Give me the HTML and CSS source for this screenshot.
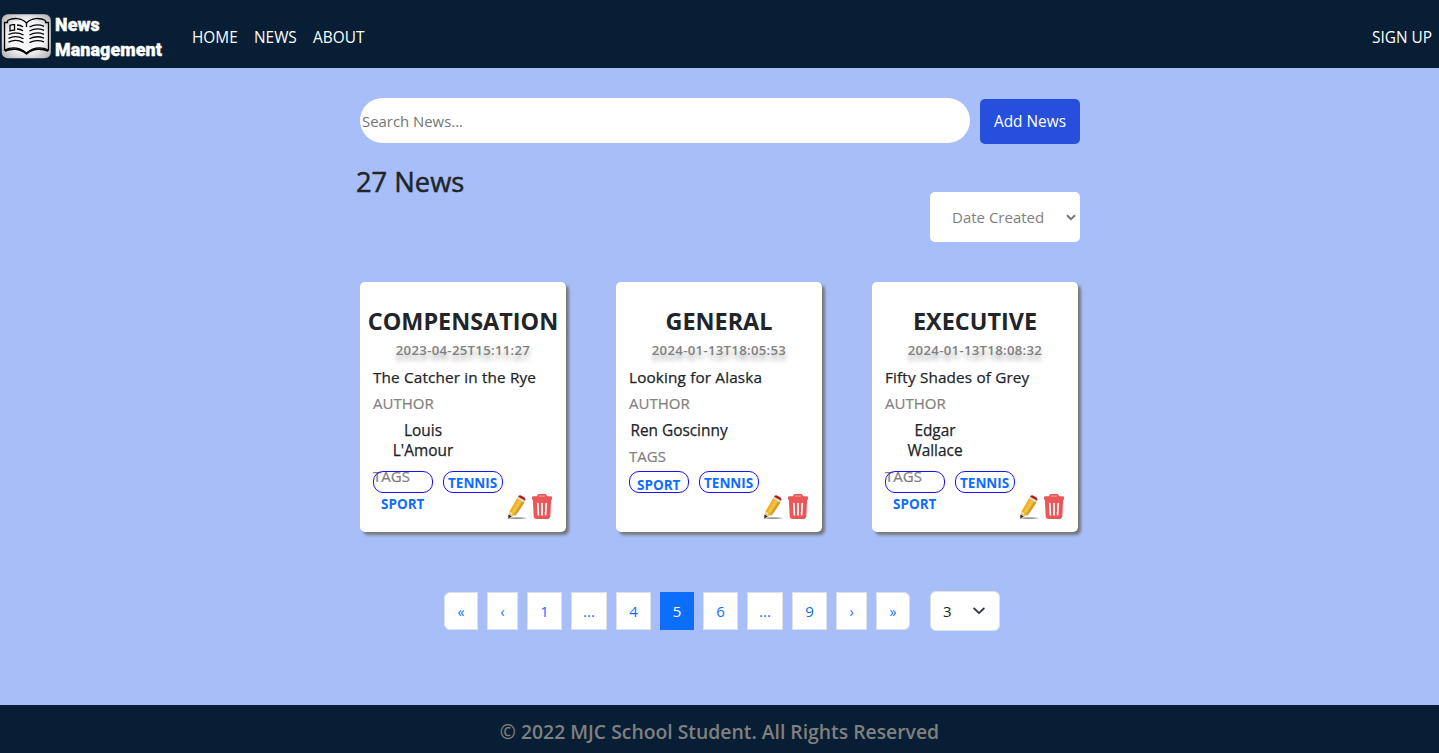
FILE: index.html
```html
<!DOCTYPE html>
<html lang="en">
<head>
<meta charset="utf-8">
<title>News Management</title>
<link rel="stylesheet" href="styles.css">
</head>
<body>
<svg class="defs" width="0" height="0" aria-hidden="true">
  <symbol id="pencil" viewBox="0 0 20 26">
    <path d="M0 24.2 C5 22.8 15 22.8 20 24.2 C15 25.2 5 25.2 0 24.2Z" fill="#999"/>
    <path d="M2 18 L7.8 21.4 L1.4 24.2Z" fill="#e9c99b"/>
    <path d="M1.6 20.6 L4.6 22.6 L1.2 24.4Z" fill="#222"/>
    <path d="M2 18 L10 4.3 L17.500 8.400 L8.500 21.600 L5.5 20.8 L4.6 18.7Z" fill="#edb52d"/>
    <path d="M5 18 L12.4 6 L14.7 7.3 L6.8 20Z" fill="#f3c244"/>
    <path d="M15.500 7.300 L17.500 8.400 L8.500 21.600 L7 20.200Z" fill="#d79a22"/>
    <path d="M10 4.3 L11 2.7 L18.300 6.800 L17.500 8.400Z" fill="#d8d8d8"/>
    <path d="M11 2.7 Q12 .8 14 1.4 L17.400 3.400 Q19.200 4.800 18.300 6.800Z" fill="#ad1f22"/>
  </symbol>
  <symbol id="trash" viewBox="0 0 20 26">
    <path d="M6 3 V2 Q6 .9 7.2 .9 H12.8 Q14 .9 14 2 V3" fill="none" stroke="#eb5757" stroke-width="1.8"/>
    <rect x="0" y="2.2" width="20" height="3.7" rx="1.2" fill="#eb5757"/>
    <path d="M.8 5 H19.200 L18.300 22.500 Q18 25 15.500 25 H4.500 Q2 25 1.700 22.500Z" fill="#eb5757"/>
    <path d="M5.800 9.500 L6.400 20.800 M10 9.500 V20.800 M14.200 9.500 L13.600 20.800" stroke="#fff" stroke-width="1.700" stroke-linecap="round"/>
  </symbol>
</svg>

<header class="navbar">
  <a class="brand">
    <svg class="brand-icon" width="50" height="45" viewBox="0 0 50 45">
      <defs><radialGradient id="tile" cx=".5" cy=".5" r=".7"><stop offset=".5" stop-color="#f8f8fb"/><stop offset="1" stop-color="#aaa"/></radialGradient></defs>
      <rect x=".8" y=".3" width="49" height="44" rx="6" fill="url(#tile)"/>
      <g fill="none" stroke="#000" stroke-width="1.300">
        <path d="M25.500 9 C20.500 3.500 12 3.500 6.500 6.500 M25.500 9 C30.500 3.500 39 3.500 44.500 6.500"/>
        <path d="M6.500 6.500 V8.500 H3.500 V36 C11 32.500 19 33.500 25.500 39 C32 33.500 40 32.500 47.500 36 V8.500 H44.500 V6.500"/>
        <path d="M3.800 37 C12 34 20 35 25.500 40 C31 35 39 34 47.200 37" stroke-width="1.600"/>
        <path d="M25.500 9 V13"/>
        <path d="M9 11.300 Q11.300 10.300 13.500 10.600 V16.200 Q11.300 16 9 16.800Z"/>
        <path d="M16 11 Q19.500 11 22 12.800 M16 15 Q19.500 15 22 16.800 M7.500 20.500 Q15 17 22.500 21 M7.500 24.300 Q15 20.800 22.500 24.800 M7.500 28.100 Q15 24.600 22.500 28.600 M28.500 13 Q35.500 9.300 43 12.300 M28.500 17 Q35.500 13.300 43 16.300 M28.500 21 Q35.500 17.300 43 20.300 M28.500 24.800 Q35.500 21.100 43 24.100 M28.500 28.600 Q35.500 24.900 43 27.900"/>
      </g>
    </svg>
    <span class="brand-name">News<br>Management</span>
  </a>
  <nav class="nav-links"><a>HOME</a><a>NEWS</a><a>ABOUT</a></nav>
  <a class="signup">SIGN UP</a>
</header>

<main class="content">
  <div class="search-row">
    <div class="search"><span>Search News...</span></div>
    <button class="add"><span>Add News</span></button>
  </div>
  <div class="summary">
    <h1 class="count">27 News</h1>
    <div class="sort"><span>Date Created</span>
      <svg width="10" height="7" viewBox="0 0 10 7"><path d="M1 1.200 L5 5.200 L9 1.200" fill="none" stroke="#757575" stroke-width="2"/></svg>
    </div>
  </div>
  <section class="cards">
    <article class="card">
      <div class="info">
        <h2 class="name">COMPENSATION</h2>
        <div class="date">2023-04-25T15:11:27</div>
        <div class="book">The Catcher in the Rye</div>
        <div class="label">AUTHOR</div>
        <div class="author">Louis<br>L'Amour</div>
        <div class="label tags-label">TAGS</div>
      </div>
      <div class="tags"><div class="tag sport wrapped"><span>SPORT</span></div><div class="tag"><span>TENNIS</span></div></div>
      <div class="actions"><svg><use href="#pencil"/></svg><svg><use href="#trash"/></svg></div>
    </article>
    <article class="card">
      <div class="info">
        <h2 class="name">GENERAL</h2>
        <div class="date">2024-01-13T18:05:53</div>
        <div class="book">Looking for Alaska</div>
        <div class="label">AUTHOR</div>
        <div class="author">Ren Goscinny</div>
        <div class="label tags-label">TAGS</div>
      </div>
      <div class="tags"><div class="tag sport"><span>SPORT</span></div><div class="tag"><span>TENNIS</span></div></div>
      <div class="actions"><svg><use href="#pencil"/></svg><svg><use href="#trash"/></svg></div>
    </article>
    <article class="card">
      <div class="info">
        <h2 class="name">EXECUTIVE</h2>
        <div class="date">2024-01-13T18:08:32</div>
        <div class="book">Fifty Shades of Grey</div>
        <div class="label">AUTHOR</div>
        <div class="author">Edgar<br>Wallace</div>
        <div class="label tags-label">TAGS</div>
      </div>
      <div class="tags"><div class="tag sport wrapped"><span>SPORT</span></div><div class="tag"><span>TENNIS</span></div></div>
      <div class="actions"><svg><use href="#pencil"/></svg><svg><use href="#trash"/></svg></div>
    </article>
  </section>
  <div class="pager">
    <ul class="pages">
      <li class="w34 first arrow">«</li><li class="w31 arrow">‹</li><li class="w35">1</li><li class="w36">...</li><li class="w35">4</li><li class="w34 active">5</li><li class="w35">6</li><li class="w36">...</li><li class="w35">9</li><li class="w31 arrow">›</li><li class="w34 last arrow">»</li>
    </ul>
    <div class="size"><span>3</span>
      <svg width="12" height="8" viewBox="0 0 12 8"><path d="M1.200 1.500 L6 6.200 L10.800 1.500" fill="none" stroke="#343a40" stroke-width="1.800" stroke-linecap="round" stroke-linejoin="round"/></svg>
    </div>
  </div>
</main>
<footer class="footer"><span>© 2022 MJC School Student. All Rights Reserved</span></footer>
</body>
</html>
```
FILE: styles.css
```css
* { box-sizing: border-box; }
body {
  margin: 0;
  height: 753px;
  display: flex;
  flex-direction: column;
  overflow: hidden;
  background: #a8bef9;
  color: #212529;
  font: 400 16px/24px "Open Sans", "Noto Sans", sans-serif;
  white-space: nowrap;
}
.defs { position: absolute; }
.navbar {
  height: 68px;
  flex: none;
  display: flex;
  align-items: center;
  padding: 8px 7px 0 1px;
  background: #071e34;
  color: #fff;
  font-size: 15.4px;
}
.brand { display: flex; width: 191px; align-items: center; }
.brand-icon { margin-top: -3px; }
.brand-name {
  margin: -1px 0 0 4px;
  font: 900 18.5px/25px Roboto, sans-serif;
  -webkit-text-stroke: .4px #fff;
  letter-spacing: .1px;
  transform: scaleX(.965);
  transform-origin: left;
}
.nav-links { display: flex; gap: 16.3px; flex: 1; }
.content { width: 720px; margin: 0 auto; flex: 1; position: relative; left: .5px; padding-top: 30px; }
.search-row { display: flex; gap: 10px; height: 46px; }
.search {
  width: 610px;
  height: 45px;
  border-radius: 23px;
  background: #fff;
  color: #757575;
  font-size: 14.9px;
  line-height: 46px;
  padding-left: 2px;
}
.add {
  width: 100px;
  height: 45px;
  margin: 1px 0 0;
  padding: 0;
  border: 0;
  border-radius: 5px;
  background: #264fdb;
  color: #fff;
  font: 15.4px "Open Sans", sans-serif;
}
.summary { display: flex; justify-content: space-between; height: 138px; }
.count {
  margin: 21px 0 0 -4px;
  font: 400 27.3px/34px "Open Sans", sans-serif;
  -webkit-text-stroke: .5px #212529;
}
.sort {
  width: 150px;
  height: 50px;
  margin-top: 48px;
  padding: 0 4px 0 22px;
  display: flex;
  align-items: center;
  justify-content: space-between;
  border-radius: 5px;
  background: #fff;
  color: #808080;
  font-size: 15px;
}
.cards { display: flex; gap: 50px; }
.card {
  width: 206px;
  height: 250px;
  border-radius: 5px;
  background: #fff;
  box-shadow: 3px 3px 3px #777;
}
.info { height: 189px; padding: 24px 13px 0; }
.name { margin: 0 -13px; text-align: center; font-size: 23.4px; font-weight: 700; line-height: 30px; }
.date {
  margin: 0 -13px;
  text-align: center;
  color: #808080;
  font-size: 13.2px;
  letter-spacing: .3px;
  font-weight: 600;
  line-height: 27px;
  padding-top: 1px;
  text-shadow: 0 5px 5px #aaa;
}
.book {
  font-size: 15.3px;
  letter-spacing: .15px;
  line-height: 27px;
  -webkit-text-stroke: .25px #212529;
}
.label {
  color: #808080;
  font-size: 15px;
  line-height: 25px;
  padding-bottom: 1px;
  -webkit-text-stroke: .2px #808080;
}
.author {
  width: max-content;
  min-width: 100px;
  margin: 4px 0 5px;
  text-align: center;
  font-size: 15.4px;
  line-height: 20px;
  -webkit-text-stroke: .25px #212529;
}
.tags-label { line-height: 20px; padding: 0; }
.tags { display: flex; gap: 10px; padding-left: 13px; height: 22px; }
.tag {
  width: 60px;
  height: 22px;
  border: 1px solid #1a0fff;
  border-radius: 10px;
  color: #0d6efd;
  font-size: 13.500px;
  font-weight: 700;
  line-height: 23px;
  padding-left: 4px;
}
.sport { padding: 2px 0 0 7px; }
.wrapped { padding-top: 20px; line-height: 25px; }
.actions { display: flex; justify-content: flex-end; gap: 5px; padding-right: 14px; margin-top: 1px; }
.actions svg { width: 20px; height: 26px; }
.pager { display: flex; align-items: flex-start; margin: 59px 0 0 84px; }
.pages { display: flex; gap: 9px; margin: 1px 20px 0 0; padding: 0; list-style: none; }
.pages li {
  height: 38px;
  border: 1px solid #dee2e6;
  background: #fff;
  color: #0d6efd;
  text-align: center;
  line-height: 37px;
  font-size: 15px;
}
.pages .arrow { font-size: 14px; }
.pages .active { background: #0d6efd; border-color: #0d6efd; color: #fff; }
.pages .first { border-radius: 6px 0 0 6px; }
.pages .last { border-radius: 0 6px 6px 0; }
.w31 { width: 31px; }
.w34 { width: 34px; }
.w35 { width: 35px; }
.w36 { width: 36px; }
.size {
  width: 70px;
  height: 40px;
  padding: 0 14px 0 12px;
  display: flex;
  align-items: center;
  justify-content: space-between;
  border: 1px solid #dee2e6;
  border-radius: 6px;
  background: #fff;
  font-size: 15px;
}
.footer {
  height: 48px;
  flex: none;
  background: #071e34;
  color: #808080;
  text-align: center;
  font-size: 19.35px;
  font-weight: 600;
  line-height: 54px;
}
```
